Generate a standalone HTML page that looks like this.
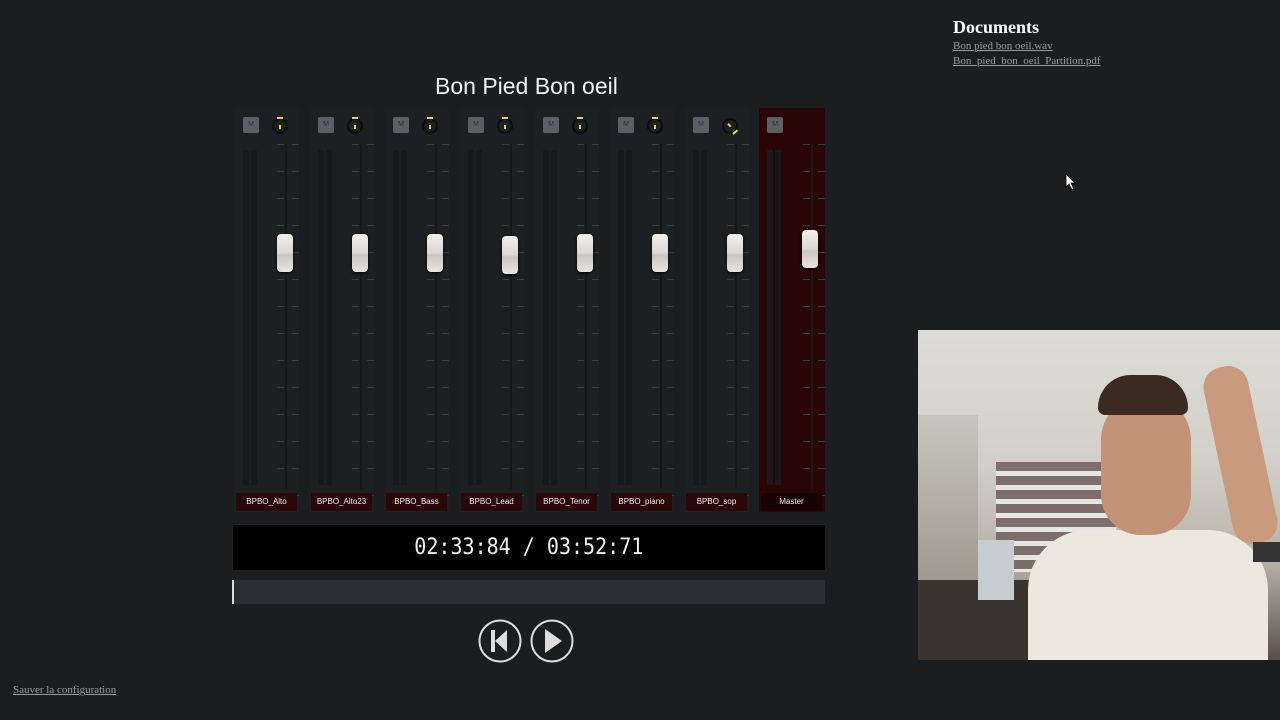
<!DOCTYPE html>
<html><head><meta charset="utf-8"><style>
body{margin:0;width:1280px;height:720px;background:#1b1e21;overflow:hidden;position:relative;font-family:"Liberation Sans",sans-serif}
.abs{position:absolute}
.strip{position:absolute;top:108px;width:64px;height:404px;background:#1d2023}
.m{position:absolute;left:8px;top:9px;width:16px;height:16px;background:#5b5f66;border-radius:2px;color:#2e3136;font-size:7px;text-align:center;line-height:16px}
.knob{position:absolute;left:37px;top:10px;width:12px;height:12px;border:2px solid #0b0c0d;border-radius:50%}
.knob:before{content:"";position:absolute;left:3px;top:-3px;width:6px;height:2px;background:#e6d82a}
.knob:after{content:"";position:absolute;left:5px;top:5px;width:2px;height:4px;background:#e6d82a}
.mt{position:absolute;top:42px;width:6px;height:335px;background:#17191c}
.tr{position:absolute;left:50px;top:36px;width:2px;height:345px;background:#15171a}
.tick{position:absolute;width:7px;height:1px;background:#383c41}
.fad{position:absolute;left:42px;top:126px;width:16px;height:38px;border-radius:4px;background:linear-gradient(#f2efea,#dcd8d3 50%,#c9c5c0 55%,#e8e4df);box-shadow:0 1px 3px #000}
.lab{position:absolute;left:1px;top:385px;width:61px;height:18px;background:#2b0707;color:#eee;font-size:8px;text-align:center;line-height:18px}
a{color:#9a9a9a;font-family:"Liberation Serif",serif;text-decoration:underline}
</style></head><body>
<div class="abs" style="left:435px;top:73px;color:#f2f2f2;font-size:23px">Bon Pied Bon oeil</div>
<div id="mix"></div>
<div class="abs" style="left:233px;top:525px;width:592px;height:45px;background:#000"></div>
<div class="abs" style="left:233px;top:525px;width:592px;height:45px;color:#f0f0f0;font-family:'DejaVu Sans Mono','Liberation Mono',monospace;font-size:22px;text-align:center;line-height:45px;transform:scaleX(0.91);transform-origin:294px 0">02:33:84 / 03:52:71</div>
<div class="abs" style="left:233px;top:580px;width:592px;height:24px;background:#2b2e32"></div>
<div class="abs" style="left:232px;top:580px;width:2px;height:24px;background:#ddd"></div>
<svg class="abs" style="left:478px;top:618px" width="100" height="48">
<circle cx="22" cy="23" r="20.5" fill="none" stroke="#ddd" stroke-width="2"/>
<rect x="13" y="12" width="4" height="22" fill="#ddd"/><path d="M17 23 L29 12 L29 34Z" fill="#ddd"/>
<circle cx="74" cy="23" r="20.5" fill="none" stroke="#ddd" stroke-width="2"/>
<path d="M67 11 L84 23 L67 35Z" fill="#ddd"/>
</svg>
<div class="abs" style="left:953px;top:17px;color:#fff;font-family:'Liberation Serif',serif;font-weight:bold;font-size:18px">Documents</div>
<div class="abs" style="left:953px;top:39px;font-size:11px;line-height:15px"><a>Bon pied bon oeil.wav</a><br><a>Bon_pied_bon_oeil_Partition.pdf</a></div>
<div class="abs" style="left:13px;top:684px;font-size:11px"><a>Sauver la configuration</a></div>
<svg class="abs" style="left:1065px;top:173px" width="12" height="18"><path d="M1 1 L1 14 L4 11 L7 17 L9 16 L6 10 L10 10Z" fill="#fff" stroke="#000" stroke-width=".8"/></svg>
<div class="abs" style="left:918px;top:330px;width:362px;height:330px;overflow:hidden;background:linear-gradient(#dcdcd6,#d2d0c8 40%,#b8b2a8 70%,#5a5048)">
 <div class="abs" style="left:0;top:85px;width:60px;height:245px;background:linear-gradient(#c8c6bc,#8a8478)"></div>
 <div class="abs" style="left:78px;top:132px;width:120px;height:110px;background:repeating-linear-gradient(#7c6e6a 0 9px,#e8e6e0 9px 14px)"></div>
 <div class="abs" style="left:0;top:250px;width:120px;height:80px;background:#3a342e"></div>
 <div class="abs" style="left:60px;top:210px;width:36px;height:60px;background:#c6ccd0"></div>
 <div class="abs" style="left:110px;top:200px;width:240px;height:140px;background:#ece8de;border-radius:60px 60px 0 0"></div>
 <div class="abs" style="left:183px;top:65px;width:90px;height:140px;background:#c49276;border-radius:45px 45px 40px 40px"></div>
 <div class="abs" style="left:180px;top:45px;width:90px;height:40px;background:#3a2a22;border-radius:45px 45px 10px 10px"></div>
 <div class="abs" style="left:300px;top:35px;width:45px;height:180px;background:#c99a7c;border-radius:20px;transform:rotate(-12deg)"></div>
 <div class="abs" style="left:335px;top:212px;width:30px;height:20px;background:#333"></div>
</div>
<script>
var h='';
for(var i=0;i<8;i++){
 var x=235+75*i,ms=i==7;
 h+='<div class="strip" style="left:'+x+'px;'+(ms?'background:#2a0505;left:759px;width:66px':'')+'">';
 h+='<div class="m">M</div>';
 if(!ms)h+='<div class="knob"'+(i==6?' style="transform:rotate(140deg)"':'')+'></div>';
 h+='<div class="mt" style="left:8px"></div><div class="mt" style="left:16px"></div><div class="tr"'+(ms?' style="left:52px"':'')+'></div>';
 var o=ms?2:0;
 for(var t=0;t<14;t++){var y=36+27*t;h+='<div class="tick" style="left:'+(42+o)+'px;top:'+y+'px"></div><div class="tick" style="left:'+(57+o)+'px;top:'+y+'px"></div>';}
 h+='<div class="fad"'+(ms?' style="top:122px;left:43px"':i==3?' style="top:128px"':'')+'></div>';
 var n=['BPBO_Alto','BPBO_Alto23','BPBO_Bass','BPBO_Lead','BPBO_Tenor','BPBO_piano','BPBO_sop','Master'][i];
 h+='<div class="lab"'+(ms?' style="background:#1a0303;left:2px"':'')+'>'+n+'</div></div>';
}
document.getElementById('mix').innerHTML=h;
</script>
</body></html>
